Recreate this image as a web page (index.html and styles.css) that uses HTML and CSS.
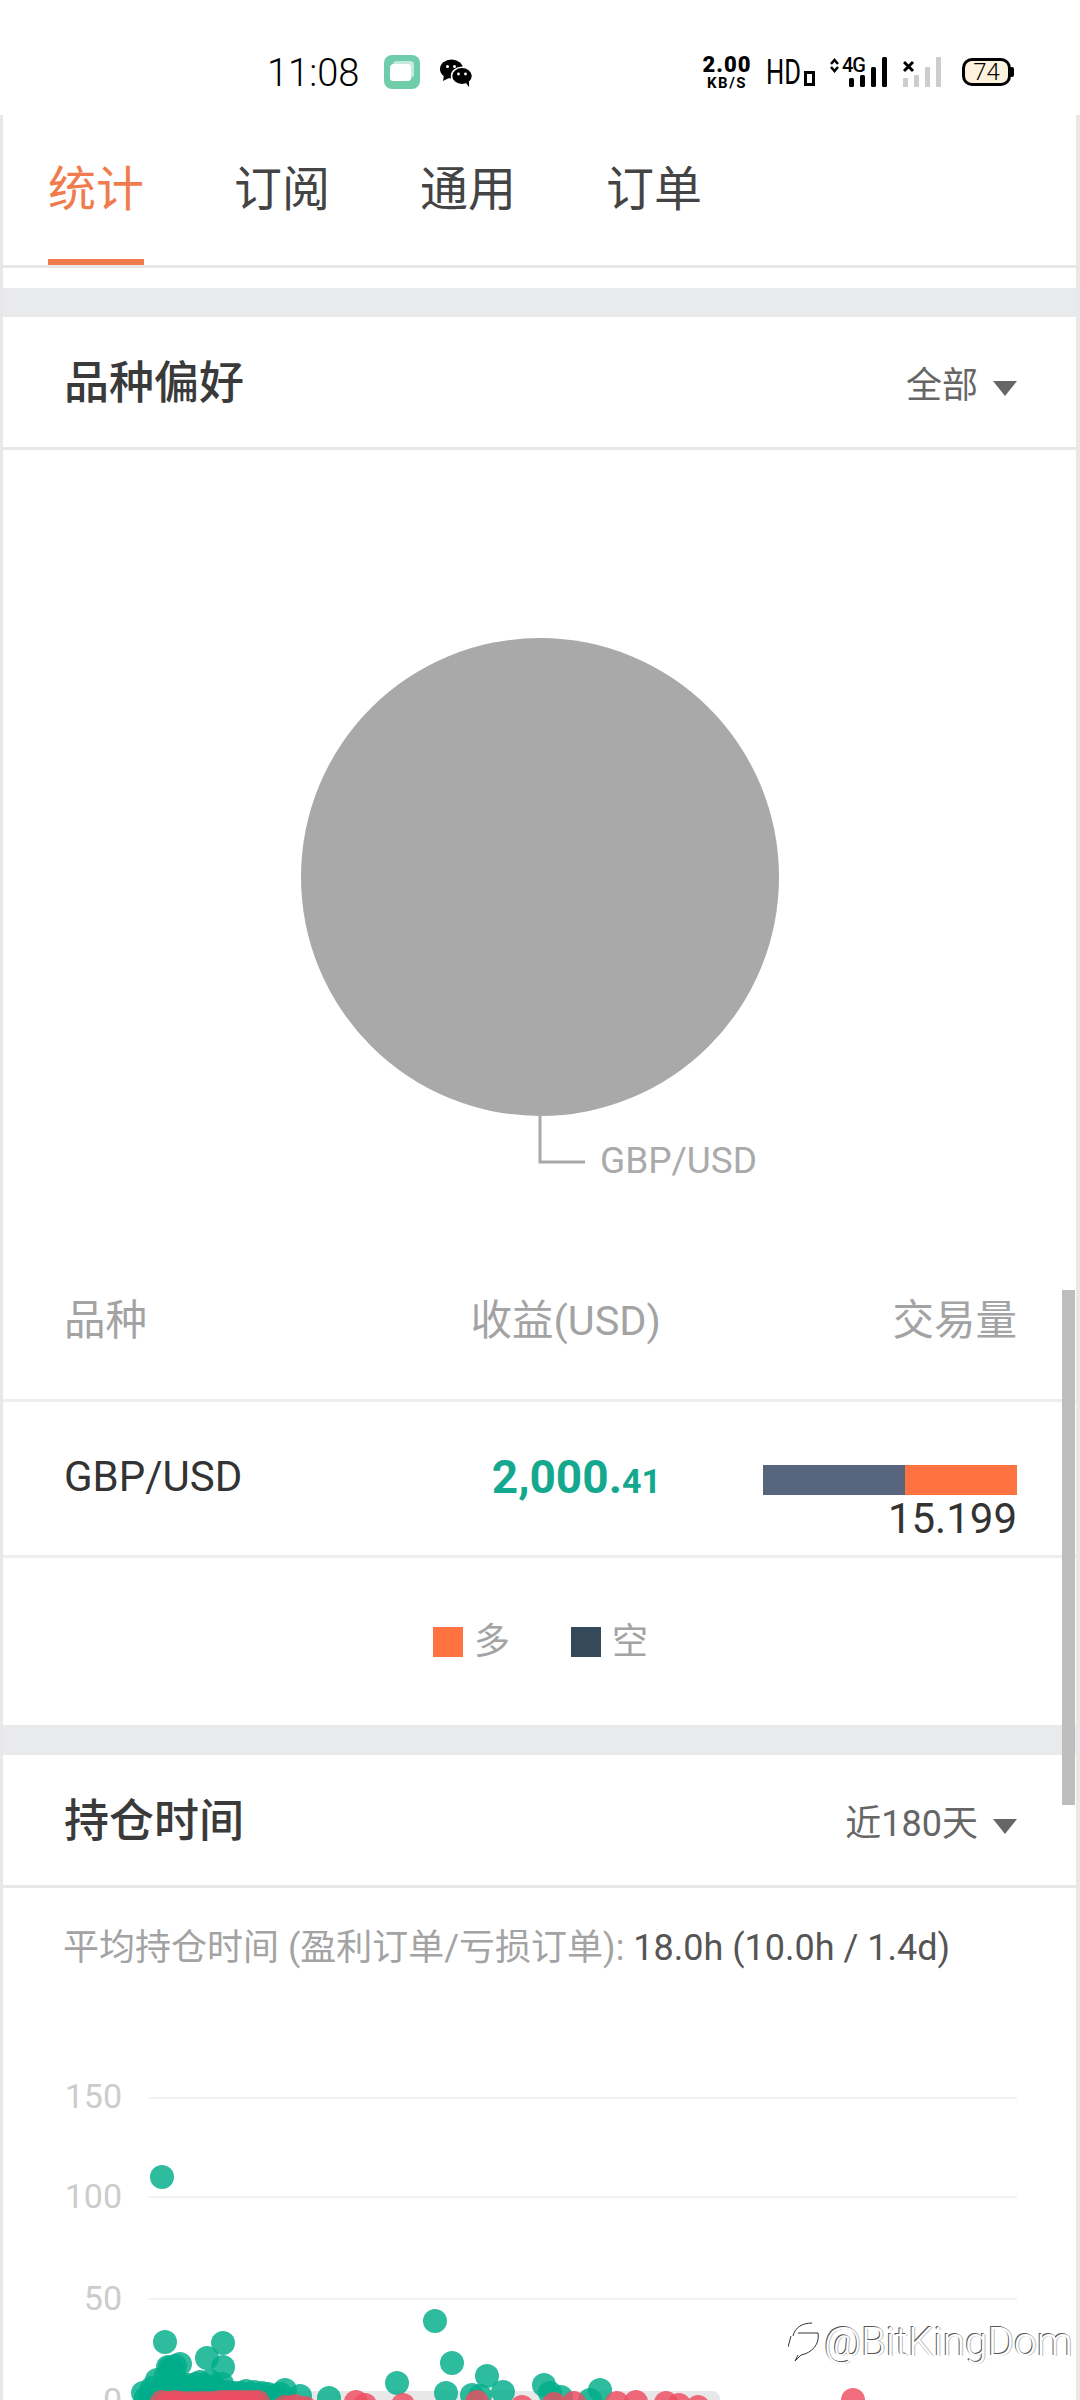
FILE: index.html
```html
<!DOCTYPE html>
<html lang="zh-CN">
<head>
  <meta charset="UTF-8">
  <title>统计</title>
  <link rel="stylesheet" href="styles.css">
</head>
<body>

  <div class="status">
    <div class="status-left">
      <span class="time">11:08</span>
      <svg class="app-icon" width="36" height="34" viewBox="0 0 36 34">
        <rect width="36" height="34" rx="8" fill="#6fcdac"/>
        <rect x="9" y="6" width="21" height="17" rx="4" fill="#c4ebdd"/>
        <path d="M10 9h14a3 3 0 0 1 3 3v11a3 3 0 0 1-3 3H9a3 3 0 0 1-3-3V13a4 4 0 0 1 4-4z" fill="#fff"/>
      </svg>
      <svg class="wechat" width="34" height="28" viewBox="0 0 34 28">
        <ellipse cx="12.500" cy="10" rx="11.500" ry="9.500"/>
        <path d="M5 16l-1 6 6-3z"/>
        <ellipse cx="23" cy="17" rx="10.500" ry="8.700" stroke="#fff" stroke-width="1.500"/>
        <path d="M27 24l3 4 0-6z"/>
        <circle cx="8.500" cy="7.500" r="1.500" fill="#fff"/>
        <circle cx="15.500" cy="7.500" r="1.500" fill="#fff"/>
        <circle cx="19.500" cy="15" r="1.400" fill="#fff"/>
        <circle cx="26.500" cy="15" r="1.400" fill="#fff"/>
      </svg>
    </div>
    <div class="status-right">
      <div class="speed"><b>2.00</b><small>KB/S</small></div>
      <div class="hd"><span>HD</span><i></i></div>
      <svg class="sim" width="59" height="36" viewBox="0 -4 59 36">
        <path class="updown" d="M1 8l3.500-4 3.500 4M1 11l3.500 4 3.500-4"/>
        <text class="sim-label" x="12" y="16">4G</text>
        <rect x="19" y="22" width="5" height="9" rx="1.500"/>
        <rect x="30" y="19" width="5" height="12" rx="1.500"/>
        <rect x="41" y="11" width="5" height="20" rx="1.500"/>
        <rect x="52" y="1" width="5" height="30" rx="1.500"/>
      </svg>
      <svg class="sim sim-off" width="39" height="36" viewBox="0 -4 39 36">
        <path class="cross" d="M1 6l9 9M10 6l-9 9"/>
        <rect x="0" y="22" width="5" height="9"/>
        <rect x="11" y="19" width="5" height="12"/>
        <rect x="22" y="11" width="5" height="20"/>
        <rect x="33" y="1" width="5" height="30"/>
      </svg>
      <div class="battery">74</div>
    </div>
  </div>

  <div class="app">
    <div class="tabs">
      <a class="tab active">统计</a>
      <a class="tab">订阅</a>
      <a class="tab">通用</a>
      <a class="tab">订单</a>
    </div>
    <div class="spacer"></div>
    <div class="band"></div>

    <div class="head">
      <h2>品种偏好</h2>
      <div class="picker">全部<span class="caret"></span></div>
    </div>

    <svg class="pie" width="1073" height="793" viewBox="3 450 1073 793">
      <circle cx="540" cy="877" r="239" fill="#a9a9a9"/>
      <path d="M540 1116v46h45" fill="none" stroke="#a9a9a9" stroke-width="3"/>
      <text class="pie-label" x="600" y="1173">GBP/USD</text>
    </svg>

    <div class="row row-head">
      <span>品种</span>
      <span class="right">收益(USD)</span>
      <span class="right">交易量</span>
    </div>
    <div class="row row-body">
      <span>GBP/USD</span>
      <span class="right profit">2,000.<small>41</small></span>
      <div class="volume">
        <div class="bar"><i class="bar-short"></i><i class="bar-long"></i></div>
        <span>15.199</span>
      </div>
    </div>

    <div class="legend">
      <span class="legend-item"><i class="swatch long"></i><span>多</span></span>
      <span class="legend-item"><i class="swatch short"></i><span>空</span></span>
    </div>
    <div class="band band-tall"></div>

    <div class="head">
      <h2>持仓时间</h2>
      <div class="picker">近180天<span class="caret"></span></div>
    </div>
    <p class="summary">平均持仓时间 (盈利订单/亏损订单): <span>18.0h (10.0h / 1.4d)</span></p>

    <svg class="chart" width="1073" height="396" viewBox="3 2004 1073 396">
      <g class="grid">
        <path d="M148 2098H1017M148 2197H1017M148 2299H1017"/>
      </g>
      <g class="axis">
        <text x="122" y="2108">150</text>
        <text x="122" y="2208">100</text>
        <text x="122" y="2310">50</text>
        <text x="122" y="2412">0</text>
      </g>
      <rect x="150" y="2391" width="570" height="30" rx="8" fill="#e8e8e8"/>
      <g class="dots win">
        <circle cx="162" cy="2177" r="12"/>
        <circle cx="165" cy="2342" r="12"/>
        <circle cx="223" cy="2343" r="12"/>
        <circle cx="207" cy="2358" r="12"/>
        <circle cx="223" cy="2367" r="12"/>
        <circle cx="168" cy="2367" r="12"/>
        <circle cx="175" cy="2366" r="12"/>
        <circle cx="180" cy="2364" r="12"/>
        <circle cx="172" cy="2369" r="12"/>
        <circle cx="170" cy="2368" r="12"/>
        <circle cx="157" cy="2380" r="12"/>
        <circle cx="165" cy="2378" r="12"/>
        <circle cx="175" cy="2378" r="12"/>
        <circle cx="170" cy="2384" r="12"/>
        <circle cx="180" cy="2384" r="12"/>
        <circle cx="188" cy="2385" r="12"/>
        <circle cx="196" cy="2384" r="12"/>
        <circle cx="200" cy="2382" r="12"/>
        <circle cx="206" cy="2386" r="12"/>
        <circle cx="210" cy="2381" r="12"/>
        <circle cx="214" cy="2386" r="12"/>
        <circle cx="222" cy="2384" r="12"/>
        <circle cx="143" cy="2393" r="12"/>
        <circle cx="146" cy="2398" r="12"/>
        <circle cx="152" cy="2388" r="12"/>
        <circle cx="150" cy="2396" r="12"/>
        <circle cx="160" cy="2392" r="12"/>
        <circle cx="168" cy="2394" r="12"/>
        <circle cx="175" cy="2392" r="12"/>
        <circle cx="183" cy="2394" r="12"/>
        <circle cx="190" cy="2392" r="12"/>
        <circle cx="198" cy="2394" r="12"/>
        <circle cx="205" cy="2392" r="12"/>
        <circle cx="213" cy="2394" r="12"/>
        <circle cx="220" cy="2392" r="12"/>
        <circle cx="228" cy="2392" r="12"/>
        <circle cx="234" cy="2393" r="12"/>
        <circle cx="240" cy="2393" r="12"/>
        <circle cx="246" cy="2391" r="12"/>
        <circle cx="254" cy="2392" r="12"/>
        <circle cx="262" cy="2393" r="12"/>
        <circle cx="268" cy="2394" r="12"/>
        <circle cx="275" cy="2396" r="12"/>
        <circle cx="285" cy="2390" r="12"/>
        <circle cx="280" cy="2394" r="12"/>
        <circle cx="300" cy="2396" r="12"/>
        <circle cx="329" cy="2398" r="12"/>
        <circle cx="397" cy="2383" r="12"/>
        <circle cx="435" cy="2321" r="12"/>
        <circle cx="452" cy="2363" r="12"/>
        <circle cx="487" cy="2376" r="12"/>
        <circle cx="446" cy="2393" r="12"/>
        <circle cx="472" cy="2395" r="12"/>
        <circle cx="480" cy="2396" r="12"/>
        <circle cx="503" cy="2392" r="12"/>
        <circle cx="544" cy="2385" r="12"/>
        <circle cx="550" cy="2393" r="12"/>
        <circle cx="561" cy="2397" r="12"/>
        <circle cx="600" cy="2390" r="12"/>
        <circle cx="590" cy="2400" r="12"/>
      </g>
      <g class="dots loss">
        <circle cx="162" cy="2402" r="12"/>
        <circle cx="168" cy="2403" r="12"/>
        <circle cx="175" cy="2402" r="12"/>
        <circle cx="182" cy="2403" r="12"/>
        <circle cx="190" cy="2403" r="12"/>
        <circle cx="198" cy="2403" r="12"/>
        <circle cx="205" cy="2403" r="12"/>
        <circle cx="212" cy="2403" r="12"/>
        <circle cx="220" cy="2402" r="12"/>
        <circle cx="226" cy="2402" r="12"/>
        <circle cx="232" cy="2402" r="12"/>
        <circle cx="238" cy="2402" r="12"/>
        <circle cx="245" cy="2402" r="12"/>
        <circle cx="252" cy="2402" r="12"/>
        <circle cx="258" cy="2402" r="12"/>
        <circle cx="285" cy="2407" r="12"/>
        <circle cx="295" cy="2406" r="12"/>
        <circle cx="305" cy="2408" r="12"/>
        <circle cx="356" cy="2402" r="12"/>
        <circle cx="365" cy="2405" r="12"/>
        <circle cx="403" cy="2405" r="12"/>
        <circle cx="477" cy="2402" r="12"/>
        <circle cx="522" cy="2407" r="12"/>
        <circle cx="554" cy="2404" r="12"/>
        <circle cx="574" cy="2403" r="12"/>
        <circle cx="617" cy="2403" r="12"/>
        <circle cx="636" cy="2402" r="12"/>
        <circle cx="666" cy="2403" r="12"/>
        <circle cx="679" cy="2405" r="12"/>
        <circle cx="698" cy="2407" r="12"/>
        <circle cx="853" cy="2400" r="12"/>
      </g>
    </svg>

    <div class="scrollbar"></div>
  </div>

  <div class="watermark">
    <svg width="32" height="40" viewBox="0 0 32 40" fill="none" stroke="#333" stroke-width="1">
      <path d="M5 14C7 5 15 1 24 1"/>
      <path d="M3 14L0 25"/>
      <path d="M10 11H30"/>
      <path d="M30 11C32 22 24 31 13 33L7 39L10 33"/>
    </svg>
    <span>@BitKingDom</span>
  </div>

</body>
</html>
```
FILE: styles.css
```css
* {
  box-sizing: border-box;
}
html, body {
  margin: 0;
  height: 2400px;
  overflow: hidden;
  background: #fff;
}
body {
  position: relative;
  font-family: Roboto, "Noto Sans CJK SC", sans-serif;
  color: #333;
}

/* status bar */
.status {
  height: 115px;
  display: flex;
  justify-content: space-between;
  padding: 55px 69px 0 267px;
  color: #000;
}
.status-left, .status-right {
  display: flex;
  align-items: flex-start;
}
.time {
  font-size: 38px;
  font-weight: 300;
  line-height: 34px;
  margin-top: 1px;
}
.app-icon {
  margin-left: 25px;
}
.wechat {
  margin: 4px 0 0 19px;
}
.speed {
  width: 50px;
  display: flex;
  flex-direction: column;
  align-items: center;
  font-weight: 700;
  line-height: 1;
}
.speed b {
  font-size: 22px;
  line-height: 20px;
  letter-spacing: 1px;
}
.speed small {
  font-size: 15px;
  line-height: 16px;
  letter-spacing: 1.500px;
}
.hd {
  display: flex;
  align-items: flex-end;
  margin: 5px 0 0 14px;
  height: 26px;
}
.hd span {
  font-size: 35px;
  line-height: 26px;
  width: 38px;
  transform: scaleX(0.73);
  transform-origin: left center;
}
.hd i {
  width: 11px;
  height: 15px;
  border: 3px solid #000;
}
.sim {
  margin: -3px 0 0 15px;
}
.updown {
  fill: none;
  stroke: #000;
  stroke-width: 2.500;
}
.sim-label {
  font-size: 20px;
  font-weight: 500;
  letter-spacing: -1px;
}
.sim-off {
  margin-left: 14px;
}
.sim-off rect {
  fill: #cdcdcd;
}
.cross {
  stroke: #000;
  stroke-width: 3;
}
.battery {
  position: relative;
  width: 49px;
  height: 28px;
  margin: 3px 0 0 20px;
  background: #fdf3dd;
  border: 3px solid #000;
  border-radius: 10px;
  font-size: 24px;
  font-weight: 300;
  line-height: 22px;
  text-align: center;
}
.battery::after {
  content: "";
  position: absolute;
  right: -6px;
  top: 6px;
  width: 3px;
  height: 10px;
  background: #000;
  border-radius: 0 2px 2px 0;
}

/* page frame */
.app {
  position: relative;
  height: 2285px;
  border-left: 3px solid #e8e8e8;
  border-right: 4px solid #e8e8e8;
  overflow: hidden;
}
.tabs {
  height: 153px;
  display: flex;
  border-bottom: 3px solid #e8e8e8;
  padding-left: 45px;
  gap: 90px;
}
.tab {
  width: 96px;
  height: 150px;
  font-size: 48px;
  line-height: 150px;
  text-align: center;
  color: #444;
}
.tab.active {
  color: #f07c4e;
  border-bottom: 6px solid #f07c4e;
}
.spacer {
  height: 20px;
}
.band {
  height: 29px;
  background: #e9eaec;
}
.band-tall {
  height: 30px;
}

.head {
  height: 133px;
  display: flex;
  justify-content: space-between;
  align-items: center;
  padding: 0 59px 6px 61px;
  border-bottom: 3px solid #e8e8e8;
}
.head h2 {
  margin: 0;
  font-size: 45px;
  font-weight: 500;
  color: #3a3a3a;
}
.picker {
  display: flex;
  align-items: center;
  margin-top: 6px;
  font-size: 36px;
  color: #666;
}
.caret {
  width: 0;
  height: 0;
  margin: 12px 0 0 15px;
  border-left: 12px solid transparent;
  border-right: 12px solid transparent;
  border-top: 15px solid #666;
}

.pie {
  display: block;
}
.pie-label {
  font-size: 37px;
  fill: #aaa;
}

/* table */
.row {
  display: grid;
  grid-template-columns: 1fr 260px 356px;
  align-items: center;
  padding: 0 59px 0 61px;
}
.right {
  text-align: right;
}
.row-head {
  height: 159px;
  padding-bottom: 8px;
  border-bottom: 3px solid #eee;
  font-size: 41.500px;
  color: #a3a3a3;
}
.row-body {
  height: 156px;
  padding-bottom: 4px;
  border-bottom: 3px solid #eee;
  font-size: 42px;
  color: #333;
}
.profit {
  margin-top: 1px;
  font-size: 46px;
  font-weight: 700;
  color: #14a98e;
}
.profit small {
  font-size: 34px;
}
.volume {
  display: flex;
  flex-direction: column;
  align-items: flex-end;
  padding-left: 102px;
  margin-top: 54px;
  line-height: 46px;
}
.bar {
  width: 100%;
  height: 30px;
  display: flex;
  margin-bottom: 1px;
}
.bar-short {
  width: 142px;
  background: #56657c;
}
.bar-long {
  flex: 1;
  background: #ff7342;
}

.legend {
  height: 167px;
  display: flex;
  justify-content: center;
  gap: 61px;
  padding-left: 2px;
  align-items: center;
  font-size: 36px;
  color: #a3a3a3;
}
.legend-item {
  display: flex;
  align-items: center;
}
.legend-item span {
  margin-bottom: 8px;
}
.swatch {
  width: 30px;
  height: 30px;
  margin-right: 11px;
}
.swatch.long {
  background: #ff7342;
}
.swatch.short {
  background: #34495a;
}

.summary {
  height: 116px;
  margin: 0;
  padding: 38px 0 0 60px;
  font-size: 36px;
  line-height: 44px;
  color: #a3a3a3;
}
.summary span {
  color: #555;
}

/* chart */
.chart {
  display: block;
}
.grid path {
  fill: none;
  stroke: #f2f2f2;
  stroke-width: 2;
}
.axis text {
  font-size: 34px;
  fill: #ccc;
  text-anchor: end;
}
.dots circle {
  fill-opacity: 0.82;
}
.win circle {
  fill: #00ad8a;
}
.loss circle {
  fill: #ee4d62;
}

.scrollbar {
  position: absolute;
  top: 1175px;
  right: 1px;
  width: 13px;
  height: 515px;
  background: #bdbdbd;
}

.watermark {
  position: absolute;
  left: 788px;
  top: 2320px;
  display: flex;
  align-items: center;
  gap: 4px;
}
.watermark span {
  font-size: 40.500px;
  font-weight: 300;
  line-height: 44px;
  color: #fff;
  text-shadow: -1px -1px 0 #555, 1px 0 0 #bbb;
}
```
